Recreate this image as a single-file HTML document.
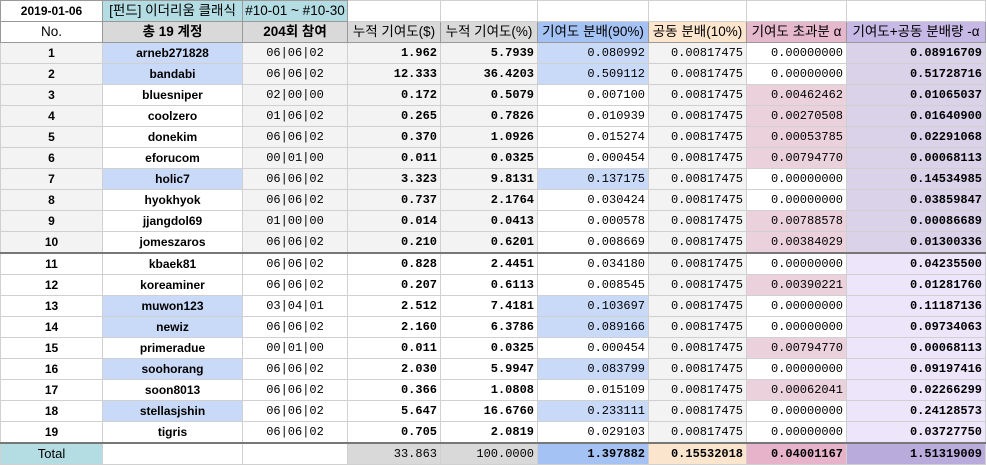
<!DOCTYPE html>
<html><head><meta charset="utf-8"><style>
body{margin:0;background:#fff;width:986px;height:463px;overflow:hidden}
table{border-collapse:collapse;table-layout:fixed;width:985px;font-family:"Liberation Sans","Noto Sans CJK KR",sans-serif;font-size:12px;color:#000}
td{height:20px;padding:0 3px;border:1px solid #d0d0d0;white-space:nowrap;overflow:hidden;line-height:20px}
.c{text-align:center}.r{text-align:right}
.m{font-family:"Liberation Mono","DejaVu Sans Mono",monospace;font-size:12px}
.b{font-weight:bold}
.g{background:#f3f3f3}
.bl{background:#c9daf8}
.pk{background:#ead1dc}
.p1{background:#d9d2e9}
.p2{background:#ede6fb}
.dl{border-left:1px solid #777}
.thick td{border-top:2px solid #777}
.nm{font-weight:bold;font-size:12px}
.sm{font-size:12px}
.h td{font-size:13.5px;padding:0 1px}
</style></head><body>
<table>
<colgroup><col style="width:102px"><col style="width:140px"><col style="width:105px"><col style="width:93px"><col style="width:97px"><col style="width:111px"><col style="width:98px"><col style="width:100px"><col style="width:139px"></colgroup>
<tr class="h"><td class="c b" style="border-color:#999;font-size:12px">2019-01-06</td><td class="c" style="background:#b4dde3;border-color:#999">[펀드] 이더리움 클래식</td><td class="c" style="background:#b4dde3;border-color:#999">#10-01 ~ #10-30</td><td></td><td></td><td></td><td></td><td></td><td></td></tr>
<tr class="h"><td class="c" style="border-color:#999">No.</td><td class="c b" style="background:#d9d9d9;border-color:#999">총 19 계정</td><td class="c b" style="background:#d9d9d9;border-color:#999">204회 참여</td><td class="c" style="background:#d9d9d9;border-color:#999">누적 기여도($)</td><td class="c" style="background:#d9d9d9;border-color:#999">누적 기여도(%)</td><td class="c" style="background:#a4c2f4;border-color:#999">기여도 분배(90%)</td><td class="c" style="background:#fce5cd;border-color:#999">공동 분배(10%)</td><td class="c" style="background:#e6b8cb;border-color:#999">기여도 초과분 α</td><td class="c" style="background:#c6b9e6;border-color:#999">기여도+공동 분배량 -α</td></tr>
<tr><td class="c b g">1</td><td class="c nm bl dl">arneb271828</td><td class="c m g sm dl">06|06|02</td><td class="r m b g dl">1.962</td><td class="r m b g">5.7939</td><td class="r m bl dl">0.080992</td><td class="r m g dl">0.00817475</td><td class="r m dl">0.00000000</td><td class="r m b p1 dl">0.08916709</td></tr>
<tr><td class="c b g">2</td><td class="c nm bl dl">bandabi</td><td class="c m g sm dl">06|06|02</td><td class="r m b g dl">12.333</td><td class="r m b g">36.4203</td><td class="r m bl dl">0.509112</td><td class="r m g dl">0.00817475</td><td class="r m dl">0.00000000</td><td class="r m b p1 dl">0.51728716</td></tr>
<tr><td class="c b g">3</td><td class="c nm dl">bluesniper</td><td class="c m g sm dl">02|00|00</td><td class="r m b g dl">0.172</td><td class="r m b g">0.5079</td><td class="r m dl">0.007100</td><td class="r m g dl">0.00817475</td><td class="r m pk dl">0.00462462</td><td class="r m b p1 dl">0.01065037</td></tr>
<tr><td class="c b g">4</td><td class="c nm dl">coolzero</td><td class="c m g sm dl">01|06|02</td><td class="r m b g dl">0.265</td><td class="r m b g">0.7826</td><td class="r m dl">0.010939</td><td class="r m g dl">0.00817475</td><td class="r m pk dl">0.00270508</td><td class="r m b p1 dl">0.01640900</td></tr>
<tr><td class="c b g">5</td><td class="c nm dl">donekim</td><td class="c m g sm dl">06|06|02</td><td class="r m b g dl">0.370</td><td class="r m b g">1.0926</td><td class="r m dl">0.015274</td><td class="r m g dl">0.00817475</td><td class="r m pk dl">0.00053785</td><td class="r m b p1 dl">0.02291068</td></tr>
<tr><td class="c b g">6</td><td class="c nm dl">eforucom</td><td class="c m g sm dl">00|01|00</td><td class="r m b g dl">0.011</td><td class="r m b g">0.0325</td><td class="r m dl">0.000454</td><td class="r m g dl">0.00817475</td><td class="r m pk dl">0.00794770</td><td class="r m b p1 dl">0.00068113</td></tr>
<tr><td class="c b g">7</td><td class="c nm bl dl">holic7</td><td class="c m g sm dl">06|06|02</td><td class="r m b g dl">3.323</td><td class="r m b g">9.8131</td><td class="r m bl dl">0.137175</td><td class="r m g dl">0.00817475</td><td class="r m dl">0.00000000</td><td class="r m b p1 dl">0.14534985</td></tr>
<tr><td class="c b g">8</td><td class="c nm dl">hyokhyok</td><td class="c m g sm dl">06|06|02</td><td class="r m b g dl">0.737</td><td class="r m b g">2.1764</td><td class="r m dl">0.030424</td><td class="r m g dl">0.00817475</td><td class="r m dl">0.00000000</td><td class="r m b p1 dl">0.03859847</td></tr>
<tr><td class="c b g">9</td><td class="c nm dl">jjangdol69</td><td class="c m g sm dl">01|00|00</td><td class="r m b g dl">0.014</td><td class="r m b g">0.0413</td><td class="r m dl">0.000578</td><td class="r m g dl">0.00817475</td><td class="r m pk dl">0.00788578</td><td class="r m b p1 dl">0.00086689</td></tr>
<tr><td class="c b g">10</td><td class="c nm dl">jomeszaros</td><td class="c m g sm dl">06|06|02</td><td class="r m b g dl">0.210</td><td class="r m b g">0.6201</td><td class="r m dl">0.008669</td><td class="r m g dl">0.00817475</td><td class="r m pk dl">0.00384029</td><td class="r m b p1 dl">0.01300336</td></tr>
<tr class="thick"><td class="c b">11</td><td class="c nm dl">kbaek81</td><td class="c m sm dl">06|06|02</td><td class="r m b dl">0.828</td><td class="r m b">2.4451</td><td class="r m dl">0.034180</td><td class="r m g dl">0.00817475</td><td class="r m dl">0.00000000</td><td class="r m b p2 dl">0.04235500</td></tr>
<tr><td class="c b">12</td><td class="c nm dl">koreaminer</td><td class="c m sm dl">06|06|02</td><td class="r m b dl">0.207</td><td class="r m b">0.6113</td><td class="r m dl">0.008545</td><td class="r m g dl">0.00817475</td><td class="r m pk dl">0.00390221</td><td class="r m b p2 dl">0.01281760</td></tr>
<tr><td class="c b">13</td><td class="c nm bl dl">muwon123</td><td class="c m sm dl">03|04|01</td><td class="r m b dl">2.512</td><td class="r m b">7.4181</td><td class="r m bl dl">0.103697</td><td class="r m g dl">0.00817475</td><td class="r m dl">0.00000000</td><td class="r m b p2 dl">0.11187136</td></tr>
<tr><td class="c b">14</td><td class="c nm bl dl">newiz</td><td class="c m sm dl">06|06|02</td><td class="r m b dl">2.160</td><td class="r m b">6.3786</td><td class="r m bl dl">0.089166</td><td class="r m g dl">0.00817475</td><td class="r m dl">0.00000000</td><td class="r m b p2 dl">0.09734063</td></tr>
<tr><td class="c b">15</td><td class="c nm dl">primeradue</td><td class="c m sm dl">00|01|00</td><td class="r m b dl">0.011</td><td class="r m b">0.0325</td><td class="r m dl">0.000454</td><td class="r m g dl">0.00817475</td><td class="r m pk dl">0.00794770</td><td class="r m b p2 dl">0.00068113</td></tr>
<tr><td class="c b">16</td><td class="c nm bl dl">soohorang</td><td class="c m sm dl">06|06|02</td><td class="r m b dl">2.030</td><td class="r m b">5.9947</td><td class="r m bl dl">0.083799</td><td class="r m g dl">0.00817475</td><td class="r m dl">0.00000000</td><td class="r m b p2 dl">0.09197416</td></tr>
<tr><td class="c b">17</td><td class="c nm dl">soon8013</td><td class="c m sm dl">06|06|02</td><td class="r m b dl">0.366</td><td class="r m b">1.0808</td><td class="r m dl">0.015109</td><td class="r m g dl">0.00817475</td><td class="r m pk dl">0.00062041</td><td class="r m b p2 dl">0.02266299</td></tr>
<tr><td class="c b">18</td><td class="c nm bl dl">stellasjshin</td><td class="c m sm dl">06|06|02</td><td class="r m b dl">5.647</td><td class="r m b">16.6760</td><td class="r m bl dl">0.233111</td><td class="r m g dl">0.00817475</td><td class="r m dl">0.00000000</td><td class="r m b p2 dl">0.24128573</td></tr>
<tr><td class="c b">19</td><td class="c nm dl">tigris</td><td class="c m sm dl">06|06|02</td><td class="r m b dl">0.705</td><td class="r m b">2.0819</td><td class="r m dl">0.029103</td><td class="r m g dl">0.00817475</td><td class="r m dl">0.00000000</td><td class="r m b p2 dl">0.03727750</td></tr>
<tr class="thick"><td class="c" style="background:#b4dde3;font-size:13px">Total</td><td class="dl"></td><td class="dl"></td><td class="r m dl" style="background:#d9d9d9">33.863</td><td class="r m" style="background:#d9d9d9">100.0000</td><td class="r m b dl" style="background:#a4c2f4">1.397882</td><td class="r m b dl" style="background:#fce5cd">0.15532018</td><td class="r m b dl" style="background:#e6b3ca">0.04001167</td><td class="r m b dl" style="background:#b9acdd">1.51319009</td></tr>
</table>
</body></html>
